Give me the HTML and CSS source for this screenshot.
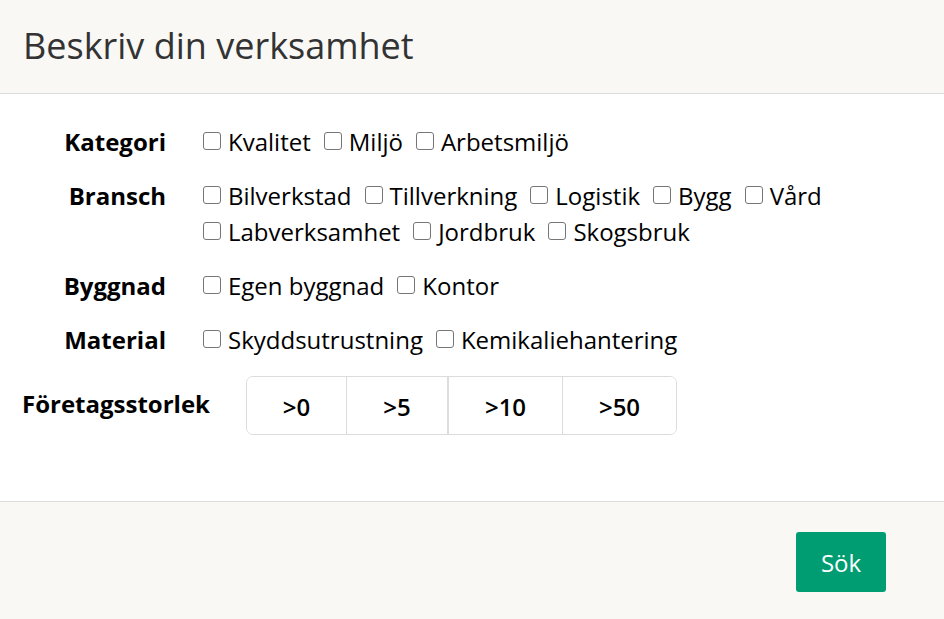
FILE: index.html
```html
<!DOCTYPE html>
<html lang="sv">
<head>
<meta charset="utf-8">
<title>Beskriv din verksamhet</title>
<link rel="stylesheet" href="styles.css">
</head>
<body>
<div class="modal">
  <header class="modal-header">
    <h4 class="modal-title">Beskriv din verksamhet</h4>
  </header>
  <main class="modal-body">
    <div class="row">
      <div class="label">Kategori</div>
      <div class="options">
        <label class="opt"><input type="checkbox"><span>Kvalitet</span></label>
        <label class="opt"><input type="checkbox"><span>Miljö</span></label>
        <label class="opt"><input type="checkbox"><span>Arbetsmiljö</span></label>
      </div>
    </div>
    <div class="row">
      <div class="label">Bransch</div>
      <div class="options">
        <label class="opt"><input type="checkbox"><span>Bilverkstad</span></label>
        <label class="opt"><input type="checkbox"><span>Tillverkning</span></label>
        <label class="opt"><input type="checkbox"><span>Logistik</span></label>
        <label class="opt"><input type="checkbox"><span>Bygg</span></label>
        <label class="opt"><input type="checkbox"><span>Vård</span></label>
        <label class="opt"><input type="checkbox"><span>Labverksamhet</span></label>
        <label class="opt"><input type="checkbox"><span>Jordbruk</span></label>
        <label class="opt"><input type="checkbox"><span>Skogsbruk</span></label>
      </div>
    </div>
    <div class="row">
      <div class="label">Byggnad</div>
      <div class="options">
        <label class="opt"><input type="checkbox"><span>Egen byggnad</span></label>
        <label class="opt"><input type="checkbox"><span>Kontor</span></label>
      </div>
    </div>
    <div class="row">
      <div class="label">Material</div>
      <div class="options">
        <label class="opt"><input type="checkbox"><span>Skyddsutrustning</span></label>
        <label class="opt"><input type="checkbox"><span>Kemikaliehantering</span></label>
      </div>
    </div>
    <div class="size-row">
      <div class="size-label">Företagsstorlek</div>
      <div class="btn-group">
        <button class="seg s0">&gt;0</button>
        <button class="seg s5">&gt;5</button>
        <button class="seg s10">&gt;10</button>
        <button class="seg s50">&gt;50</button>
      </div>
    </div>
  </main>
  <footer class="modal-footer">
    <button class="btn-primary">Sök</button>
  </footer>
</div>
</body>
</html>
```
FILE: styles.css
```css
* { box-sizing: border-box; }
html, body { margin: 0; padding: 0; }
body {
  font-family: "Open Sans", "Liberation Sans", sans-serif;
  font-size: 24px;
  line-height: 36px;
  color: #000;
  background: #fff;
  width: 944px;
  height: 619px;
  overflow: hidden;
}
.modal { display: flex; flex-direction: column; height: 619px; }
.modal-header {
  background: #f9f8f5;
  border-bottom: 1px solid #dedede;
  height: 94px;
  padding: 0 23px;
  display: flex;
  align-items: center;
}
.modal-title {
  margin: 0;
  font-weight: 400;
  font-size: 36px;
  line-height: 43px;
  color: #333;
  padding-bottom: 2px;
}
.modal-body {
  padding: 30px 22px 0 22px;
  height: 408px;
  border-bottom: 1px solid #dedede;
}
.row {
  display: flex;
  margin-bottom: 18px;
}
.label {
  width: 144px;
  flex: none;
  text-align: right;
  font-weight: 700;
  margin-right: 37px;
}
.options {
  display: flex;
  flex-wrap: wrap;
  width: 660px;
  column-gap: 13px;
}
.opt {
  display: inline-flex;
  align-items: center;
  white-space: nowrap;
}
.opt input {
  appearance: none;
  -webkit-appearance: none;
  margin: 0 7px 3px 0;
  width: 18px;
  height: 18px;
  border: 1.5px solid #767676;
  border-radius: 3px;
  background: #fff;
}
.size-row {
  display: flex;
  align-items: center;
}
.size-label {
  font-weight: 700;
  width: 224px;
  flex: none;
  margin-top: -4px;
}
.btn-group {
  display: flex;
  border: 1px solid #dcdcdc;
  border-radius: 7px;
  height: 59px;
  overflow: hidden;
}
.seg {
  font-family: inherit;
  font-size: 24px;
  font-weight: 600;
  color: #000;
  background: #fff;
  border: none;
  border-left: 1px solid #dcdcdc;
  padding: 0;
  margin: 0;
  height: 57px;
  padding-top: 2px;
}
.seg.s0 { border-left: none; width: 99px; }
.seg.s5 { width: 101px; }
.seg.s10 { width: 115px; border-left: 2px solid #dcdcdc; }
.seg.s50 { width: 114px; }
.modal-footer {
  flex: 1;
  background: #f9f8f5;
  display: flex;
  justify-content: flex-end;
  align-items: flex-start;
  padding: 30px 58px 0 0;
}
.btn-primary {
  font-family: inherit;
  font-size: 24px;
  font-weight: 400;
  color: #fff;
  background: #009c72;
  border: none;
  border-radius: 3px;
  width: 90px;
  height: 60px;
  padding: 0;
}
```
